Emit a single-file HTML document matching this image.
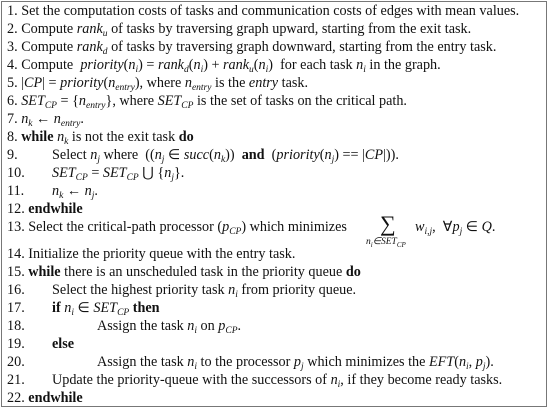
<!DOCTYPE html>
<html><head><meta charset="utf-8"><style>
html,body{margin:0;padding:0;background:#fff;}
body{width:550px;height:409px;position:relative;overflow:hidden;font-family:"Liberation Serif",serif;font-size:14.2px;color:#111;}
.box{position:absolute;left:1px;top:1px;width:544px;height:404px;border:1.5px solid #777;}
.l{position:absolute;left:7px;height:18px;line-height:18px;white-space:nowrap;}
i{font-style:italic;}
b{font-weight:bold;}
sub{font-size:9.5px;vertical-align:-3px;line-height:0;}
.sum{position:absolute;left:380px;top:214px;font-size:22px;line-height:20px;}
.sumsub{position:absolute;left:366px;top:236px;font-size:9.5px;font-style:italic;}
</style></head><body>
<div class="box"></div>
<div class="l" style="top:2px">1. Set the computation costs of tasks and communication costs of edges with mean values.</div>
<div class="l" style="top:20px">2. Compute <i>rank<sub>u</sub></i> of tasks by traversing graph upward, starting from the exit task.</div>
<div class="l" style="top:38px">3. Compute <i>rank<sub>d</sub></i> of tasks by traversing graph downward, starting from the entry task.</div>
<div class="l" style="top:56px">4. Compute &nbsp;<i>priority</i>(<i>n<sub>i</sub></i>) = <i>rank<sub>d</sub></i>(<i>n<sub>i</sub></i>) + <i>rank<sub>u</sub></i>(<i>n<sub>i</sub></i>) &nbsp;for each task <i>n<sub>i</sub></i> in the graph.</div>
<div class="l" style="top:74px">5. |<i>CP</i>| = <i>priority</i>(<i>n<sub>entry</sub></i>), where <i>n<sub>entry</sub></i> is the <i>entry</i> task.</div>
<div class="l" style="top:92px">6. <i>SET<sub>CP</sub></i> = {<i>n<sub>entry</sub></i>}, where <i>SET<sub>CP</sub></i> is the set of tasks on the critical path.</div>
<div class="l" style="top:110px">7. <i>n<sub>k</sub></i> ← <i>n<sub>entry</sub></i>.</div>
<div class="l" style="top:128px">8. <b>while</b> <i>n<sub>k</sub></i> is not the exit task <b>do</b></div>
<div class="l" style="top:146px">9.<span style="position:absolute;left:45px">Select <i>n<sub>j</sub></i> where &nbsp;((<i>n<sub>j</sub></i> ∈ <i>succ</i>(<i>n<sub>k</sub></i>)) &nbsp;<b>and</b> &nbsp;(<i>priority</i>(<i>n<sub>j</sub></i>) == |<i>CP</i>|)).</span></div>
<div class="l" style="top:164px">10.<span style="position:absolute;left:45px"><i>SET<sub>CP</sub></i> = <i>SET<sub>CP</sub></i> ⋃ {<i>n<sub>j</sub></i>}.</span></div>
<div class="l" style="top:182px">11.<span style="position:absolute;left:45px"><i>n<sub>k</sub></i> ← <i>n<sub>j</sub></i>.</span></div>
<div class="l" style="top:200px">12. <b>endwhile</b></div>
<div class="l" style="top:218px">13. Select the critical-path processor (<i>p<sub>CP</sub></i>) which minimizes</div>
<div class="sum">∑</div>
<div class="sumsub">n<sub style="font-size:7px">i</sub>∈SET<sub style="font-size:7px">CP</sub></div>
<div class="l" style="top:218px;left:415px"><i>w<sub>i,j</sub></i>, &nbsp;∀<i>p<sub>j</sub></i> ∈ <i>Q</i>.</div>
<div class="l" style="top:245px">14. Initialize the priority queue with the entry task.</div>
<div class="l" style="top:263px">15. <b>while</b> there is an unscheduled task in the priority queue <b>do</b></div>
<div class="l" style="top:281px">16.<span style="position:absolute;left:45px">Select the highest priority task <i>n<sub>i</sub></i> from priority queue.</span></div>
<div class="l" style="top:299px">17.<span style="position:absolute;left:45px"><b>if</b> <i>n<sub>i</sub></i> ∈ <i>SET<sub>CP</sub></i> <b>then</b></span></div>
<div class="l" style="top:317px">18.<span style="position:absolute;left:90px">Assign the task <i>n<sub>i</sub></i> on <i>p<sub>CP</sub></i>.</span></div>
<div class="l" style="top:335px">19.<span style="position:absolute;left:45px"><b>else</b></span></div>
<div class="l" style="top:353px">20.<span style="position:absolute;left:90px">Assign the task <i>n<sub>i</sub></i> to the processor <i>p<sub>j</sub></i> which minimizes the <i>EFT</i>(<i>n<sub>i</sub></i>, <i>p<sub>j</sub></i>).</span></div>
<div class="l" style="top:371px">21.<span style="position:absolute;left:45px">Update the priority-queue with the successors of <i>n<sub>i</sub></i>, if they become ready tasks.</span></div>
<div class="l" style="top:389px">22. <b>endwhile</b></div>
</body></html>
